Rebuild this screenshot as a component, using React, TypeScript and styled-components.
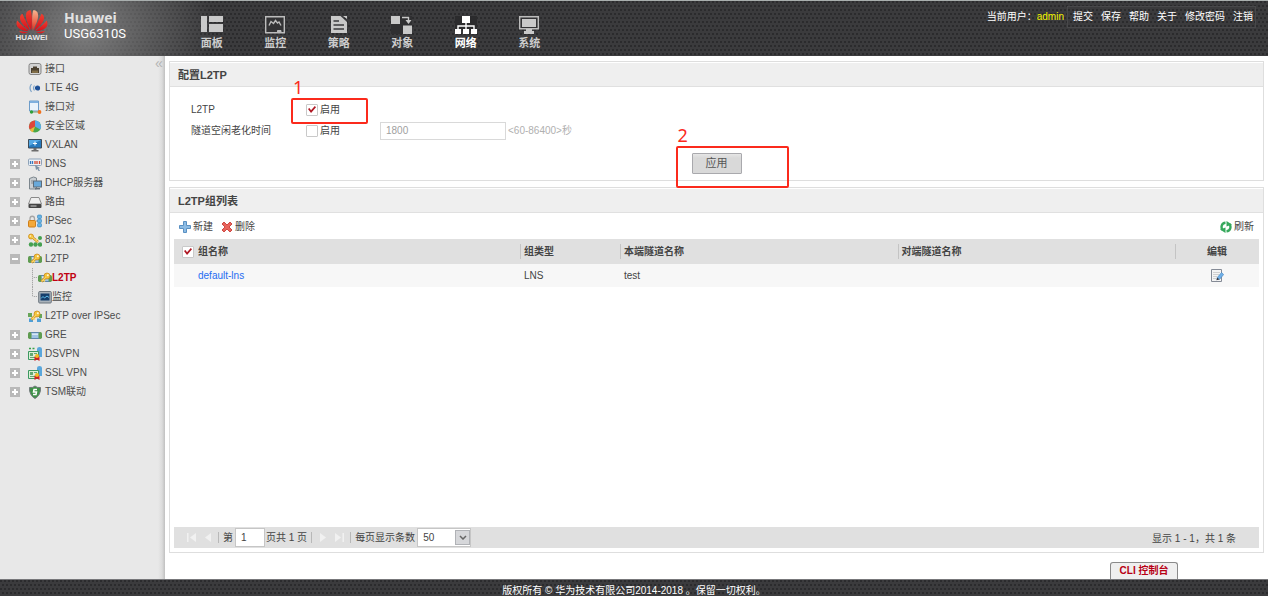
import React from "react";
import styled, { createGlobalStyle } from "styled-components";

const GlobalStyle = createGlobalStyle`
  *, *::before, *::after { box-sizing: border-box; }
  body {
    margin: 0;
    background: #ffffff;
    color: #444444;
    font: 10px/14px "Liberation Sans", "Noto Sans CJK SC", sans-serif;
  }
  a { color: inherit; text-decoration: none; }
  button, input, select { font: inherit; color: inherit; margin: 0; }
`;

const mesh = `
  radial-gradient(circle at 1px 1px, #2b2b2d 1px, transparent 1px) 0 0 / 4px 8px,
  radial-gradient(circle at 1px 1px, #2b2b2d 1px, transparent 1px) 2px 4px / 4px 8px`;

const Page = styled.div`
  display: flex;
  flex-direction: column;
  min-height: 100vh;
`;

/* ---------- header ---------- */

const Header = styled.header`
  display: flex;
  align-items: flex-start;
  height: 56px;
  border-top: 1px solid #a9afae;
  background: radial-gradient(ellipse 130px 110px at 84px 28px, rgba(150, 150, 150, 0.75), rgba(130, 130, 130, 0.5) 45%, transparent), ${mesh}, #3b3b3d;
  color: #ffffff;
`;

const Brand = styled.div`
  display: flex;
  width: 180px;
  flex: none;
  padding: 8px 0 0 14px;
  gap: 15px;
`;

const LogoMark = styled.div`
  display: flex;
  flex-direction: column;
  align-items: center;
  width: 35px;
  color: #e6e6e6;
  font: bold 8px/8px "Liberation Sans", sans-serif;
`;

const BrandText = styled.div`
  font-family: "Open Sans", sans-serif;
`;

const BrandName = styled.div`
  font-size: 14px;
  font-weight: 700;
  line-height: 18px;
  color: #e2e2e2;
`;

const Model = styled.div`
  font-family: Roboto, sans-serif;
  font-size: 13px;
  line-height: 14px;
`;

const Nav = styled.nav`
  display: flex;
  width: 381px;
  padding-top: 14px;
`;

const NavItem = styled.a<{ $active?: boolean }>`
  display: flex;
  flex: 1;
  flex-direction: column;
  align-items: center;
  gap: 1px;
  font-size: 11px;
  font-weight: 700;
  line-height: 16px;
  color: ${(p) => (p.$active ? "#ffffff" : "#cccccc")};
`;

const UserBar = styled.div`
  display: flex;
  align-items: center;
  margin: 5px 12px 0 auto;
  line-height: 20px;
`;

const UserName = styled.span`
  margin: 0 3px 0 0;
  color: #f4f400;
`;

const UserLinks = styled.div`
  display: flex;
  gap: 8px;
  padding: 0 2px 0 5px;
  border: 1px solid #48484a;
`;

/* ---------- sidebar ---------- */

const Body = styled.div`
  display: flex;
  flex: 1;
`;

const Sidebar = styled.aside`
  position: relative;
  width: 165px;
  flex: none;
  padding-top: 3px;
  background: linear-gradient(to right, #e8e8e8 158px, #dcdcdc 162px, #c0c0c0);
`;

const Collapse = styled.button`
  position: absolute;
  top: 2px;
  right: 1px;
  width: 10px;
  padding: 0;
  border: 0;
  background: none;
  color: #b4b4b4;
  font-size: 14px;
  line-height: 11px;
`;

const Tree = styled.ul`
  margin: 0;
  padding: 0 0 0 10px;
  list-style: none;
`;

const TreeRow = styled.li`
  display: flex;
  align-items: center;
  height: 19px;
`;

const ExpandSlot = styled.span`
  display: flex;
  width: 18px;
  flex: none;
`;

const Expander = styled.button<{ $open?: boolean }>`
  position: relative;
  width: 10px;
  height: 10px;
  padding: 0;
  border: 0;
  background: #b9b9b9;
  &::before, &::after {
    content: "";
    position: absolute;
    background: #ffffff;
  }
  &::before { left: 2px; top: 4px; width: 6px; height: 2px; }
  &::after { left: 4px; top: 2px; width: 2px; height: ${(p) => (p.$open ? "0" : "6px")}; }
`;

const TreeLink = styled.a<{ $active?: boolean; $nested?: boolean }>`
  display: flex;
  align-items: center;
  gap: ${(p) => (p.$nested ? "0" : "3px")};
  color: ${(p) => (p.$active ? "#c00010" : "#4c4c4c")};
  font-weight: ${(p) => (p.$active ? 700 : 400)};
`;

const Branch = styled.span<{ $last?: boolean }>`
  width: 6px;
  height: 19px;
  margin-left: 22px;
  background:
    repeating-linear-gradient(#a8a8a8 0 1px, #d6d6d6 1px 2px) 0 0 / 1px ${(p) => (p.$last ? "10px" : "19px")} no-repeat,
    repeating-linear-gradient(to right, #a8a8a8 0 1px, #d6d6d6 1px 2px) 0 9px / 5px 1px no-repeat;
`;

/* ---------- content ---------- */

const Main = styled.main`
  display: flex;
  flex: 1;
  min-width: 0;
  flex-direction: column;
  gap: 6px;
  padding: 5px 4px 0;
`;

const Panel = styled.section<{ $fill?: boolean }>`
  display: flex;
  flex-direction: column;
  flex: ${(p) => (p.$fill ? "1" : "none")};
  padding: 1px 0 4px;
  border: 1px solid #dedede;
`;

const PanelTitle = styled.h2`
  margin: 0;
  padding: 1px 8px 0;
  border-bottom: 1px solid #e0e0e0;
  background: #efefef;
  font-size: 11px;
  line-height: 22px;
`;

const Form = styled.form`
  display: flex;
  flex-direction: column;
  padding: 12px 0 2px 21px;
`;

const FormRow = styled.div`
  display: flex;
  align-items: center;
  height: 21px;
`;

const FieldName = styled.span`
  width: 115px;
`;

const CheckLabel = styled.label`
  position: relative;
  display: flex;
  align-items: center;
  gap: 2px;
  width: 74px;
`;

const Checkbox = styled.input.attrs({ type: "checkbox" })`
  position: relative;
  appearance: none;
  width: 12px;
  height: 12px;
  border: 1px solid #c9c9c9;
  border-radius: 1px;
  background: #ffffff;
  &:checked::after {
    content: "";
    position: absolute;
    inset: 1px;
    background: #b01824;
    clip-path: polygon(0 45%, 18% 30%, 38% 58%, 85% 5%, 100% 22%, 38% 95%);
  }
`;

const TimeInput = styled.input`
  width: 126px;
  height: 18px;
  padding: 0 5px;
  border: 1px solid #d9d9d9;
  background: #ffffff;
  color: #a0a0a0;
`;

const Hint = styled.span`
  padding-left: 2px;
  color: #b0b0b0;
`;

const FormActions = styled.div`
  display: flex;
  justify-content: center;
  padding: 12px 21px 0 0;
`;

const ApplyWrap = styled.div`
  position: relative;
`;

const ApplyButton = styled.button`
  display: block;
  width: 50px;
  height: 21px;
  padding: 0;
  border: 1px solid #a9a9ad;
  border-radius: 1px;
  background: linear-gradient(#e6e6e6, #d9d9d9 4px);
  color: #555555;
  font-size: 11px;
  line-height: 19px;
`;

const Callout = styled.span<{ $box: string }>`
  position: absolute;
  inset: ${(p) => p.$box};
  border: 2px solid #fb2a1c;
  border-radius: 2px;
  pointer-events: none;
`;

const CalloutNumber = styled.span`
  position: absolute;
  left: 0;
  bottom: 100%;
  color: #fb2a1c;
  font: 18px/26px "Noto Sans", sans-serif;
`;

const Toolbar = styled.div`
  display: flex;
  align-items: center;
  gap: 8px;
  height: 26px;
  padding: 2px 9px 0;
`;

const ToolButton = styled.button<{ $end?: boolean }>`
  display: flex;
  align-items: center;
  gap: 2px;
  margin-left: ${(p) => (p.$end ? "auto" : "0")};
  padding: 0;
  border: 0;
  background: none;
`;

const Table = styled.table`
  width: calc(100% - 8px);
  margin: 0 4px;
  border-collapse: collapse;
  table-layout: fixed;
`;

const Th = styled.th<{ $w?: number; $first?: boolean; $center?: boolean }>`
  width: ${(p) => (p.$w ? `${p.$w}px` : "auto")};
  height: 25px;
  padding: 0 0 0 ${(p) => (p.$first ? "8px" : p.$center ? "0" : "4px")};
  background: ${(p) =>
    p.$first ? "#e0e0e0" : "linear-gradient(#c4c4c4, #c4c4c4) 0 5px / 1px 15px no-repeat #e0e0e0"};
  text-align: ${(p) => (p.$center ? "center" : "left")};
`;

const HeadCheck = styled.label`
  display: flex;
  align-items: center;
  gap: 4px;
`;

const Td = styled.td<{ $first?: boolean; $center?: boolean }>`
  height: 23px;
  padding: 0 0 0 ${(p) => (p.$first ? "24px" : p.$center ? "0" : "4px")};
  background: #f7f7f7;
  text-align: ${(p) => (p.$center ? "center" : "left")};
`;

const GroupLink = styled.a`
  color: #1f6df2;
`;

const IconButton = styled.button`
  display: inline-flex;
  padding: 0;
  border: 0;
  background: none;
  vertical-align: middle;
`;

const Pager = styled.div`
  display: flex;
  align-items: center;
  height: 21px;
  margin: auto 4px 0;
  padding: 0 23px 0 10px;
  background: #e0e0e0;
`;

const PagerButton = styled.button`
  display: flex;
  width: 15px;
  justify-content: center;
  padding: 0;
  border: 0;
  background: none;
`;

const Separator = styled.span`
  width: 1px;
  height: 11px;
  margin: 0 4px;
  background: #b8b8b8;
`;

const PageInput = styled.input`
  width: 30px;
  height: 19px;
  margin: 0 1px 0 2px;
  padding: 0 5px;
  border: 1px solid #c6c6c6;
  background: #ffffff;
`;

const SizeBox = styled.span`
  position: relative;
  display: flex;
  margin-left: 2px;
`;

const SizeSelect = styled.select`
  appearance: none;
  width: 54px;
  height: 19px;
  padding: 0 5px;
  border: 1px solid #c6c6c6;
  border-radius: 0;
  background: #ffffff;
`;

const SelectArrow = styled.span`
  position: absolute;
  top: 2px;
  right: 1px;
  display: flex;
  align-items: center;
  justify-content: center;
  width: 15px;
  height: 15px;
  border: 1px solid #b0b2b6;
  background: #d6d7da;
  pointer-events: none;
`;

const Total = styled.span`
  margin-left: auto;
  padding-top: 2px;
`;

const ConsoleBar = styled.div`
  display: flex;
  justify-content: flex-end;
  padding: 3px 86px 0 0;
`;

const ConsoleTab = styled.button`
  width: 68px;
  height: 17px;
  padding: 0;
  border: 1px solid #8a8a8a;
  border-bottom: 0;
  border-radius: 3px 3px 0 0;
  background: #efefef;
  color: #b80014;
  font-weight: 700;
`;

const Footer = styled.footer`
  height: 17px;
  padding-top: 4px;
  border-top: 1px solid #77777a;
  background: ${mesh}, #3b3b3d;
  color: #ffffff;
  line-height: 13px;
  text-align: center;
`;

/* ---------- drawings ---------- */

const HuaweiLogo = () => (
  <svg width="32" height="25" viewBox="0 0 32 25" aria-hidden="true">
    <defs>
      <linearGradient id="petal" x1="0" y1="0" x2="0" y2="1">
        <stop offset="0" stopColor="#ee4030" />
        <stop offset="1" stopColor="#d40f1b" />
      </linearGradient>
      <linearGradient id="petalLight" x1="0" y1="0" x2="0" y2="1">
        <stop offset="0" stopColor="#f9b48e" />
        <stop offset="1" stopColor="#e0301f" />
      </linearGradient>
    </defs>
    <g fill="url(#petal)">
      <path d="M15.300 21.500C11.500 14.500 8.500 8 10.500 3.500 11.500 1.500 13.500 1 14.800 1.200 16 5 16.300 14 15.300 21.500Z" />
      <path d="M14 21.800C8 17.500 3.500 12.500 4 8.200 4.200 6.500 5.300 5.300 6.500 4.800 8.500 10 12 16 14 21.800Z" />
      <path d="M18 21.800C24 17.500 28.500 12.500 28 8.200 27.800 6.500 26.700 5.300 25.500 4.800 23.500 10 20 16 18 21.800Z" />
      <path d="M12.600 22.200C7 22 2 20 .8 16.500 .2 14.500 .6 12.800 1.400 11.500 4.500 15.500 9.500 19 12.600 22.200Z" />
      <path d="M19.400 22.200C25 22 30 20 31.200 16.500 31.800 14.500 31.400 12.800 30.600 11.500 27.500 15.500 22.500 19 19.400 22.200Z" />
      <path d="M12 23C9 24.800 5 25.200 3 21.800 6 22.800 9 23 12 23Z" />
      <path d="M20 23C23 24.800 27 25.200 29 21.800 26 22.800 23 23 20 23Z" />
    </g>
    <path fill="url(#petalLight)" d="M16.700 21.500C20.500 14.500 23.500 8 21.500 3.500 20.500 1.500 18.500 1 17.200 1.200 16 5 15.700 14 16.700 21.500Z" />
  </svg>
);

type NavIconName = "panel" | "monitor" | "policy" | "object" | "network" | "system";

const navShapes: Record<NavIconName, React.ReactNode> = {
  panel: (
    <g fill="#c9c9c9">
      <path d="M0 1h6v16H0zM8 1h14v6H8zM8 9h14v8H8z" />
    </g>
  ),
  monitor: (
    <g fill="none" stroke="#bcbcbc">
      <path fill="#333335" strokeWidth="1.400" d="M1.700 1.700h18.600v16H1.700z" />
      <path strokeWidth="1.400" d="M5 10.500l2-4 2.500 2 2-3 2 2.500 1.500-1 2 3.500" />
      <path fill="#bcbcbc" d="M13.500 15.500h3.500v1.500h-3.500z" />
    </g>
  ),
  policy: (
    <g>
      <path fill="#c9c9c9" d="M3 1h9.500l6.500 6v11H3z" />
      <path fill="#c9c9c9" d="M15 1h4v3z" />
      <path stroke="#3a3a3c" strokeWidth="1.400" d="M5.500 6h5.500M5.500 10H16M5.500 14H16" />
    </g>
  ),
  object: (
    <g>
      <path fill="#2f2f31" d="M0 1h21v18H0z" />
      <path fill="#c9c9c9" d="M0 1h9v8H0zM12 10.500h9V19h-9z" />
      <path fill="none" stroke="#c9c9c9" strokeWidth="1.400" d="M11 2.500h6.500V6" />
      <path fill="#c9c9c9" d="M14.500 5h6l-3 4z" />
    </g>
  ),
  network: (
    <g>
      <path fill="#2b2b2d" d="M0 1h22v13H0z" />
      <path fill="#ffffff" d="M7 1h8v7H7zM0 14h6v5H0zM8 14h6v5H8zM16 14h6v5h-6z" />
      <path fill="none" stroke="#ffffff" strokeWidth="1.400" d="M11 7v8M3 15v-4h16v4" />
    </g>
  ),
  system: (
    <g>
      <path fill="#333335" stroke="#bcbcbc" strokeWidth="1.400" d="M1.700 1.700h18.600v12.100H1.700z" />
      <path fill="#c9c9c9" d="M4 4h14v8H4zM8 14h6v2H8zM6 16h10v3H6z" />
    </g>
  ),
};

const NavIcon = ({ name }: { name: NavIconName }) => (
  <svg width="22" height="19" viewBox="0 0 22 19" aria-hidden="true">
    {navShapes[name]}
  </svg>
);

const keyShape = (
  <g>
    <path fill="none" stroke="#c98413" strokeWidth="2.600" d="M8 6L3.500 10.500" />
    <circle cx="9" cy="5" r="3" fill="#f3c43c" stroke="#c98413" strokeWidth=".7" />
    <path fill="none" stroke="#f7d565" strokeWidth="1.300" d="M8 6L3.500 10.500M5.500 9l1.500 1.500" />
    <circle cx="9.800" cy="4.300" r="1" fill="#fff6d6" />
  </g>
);

const tunnelShape = (
  <g>
    <rect x="1" y="4.500" width="12" height="6" rx="2" fill="#9fc3e6" stroke="#5f86ad" />
    <path fill="#d5e6f6" d="M4 5.500h6v1.500H4z" />
    <rect x="0" y="4" width="3.500" height="7" rx="1.700" fill="#5f9c50" />
    <rect x="10.500" y="4" width="3.500" height="7" rx="1.700" fill="#5f9c50" />
  </g>
);

const certShape = (
  <g>
    <path fill="#5aa7dc" d="M9 2q0-2 2.500-2T14 2v8H9z" />
    <path fill="#dcefd8" stroke="#3c9960" d="M.5 4.500h10v8H.5z" />
    <path fill="#62a873" d="M2 6h3v3H2zM6 6h3v1H6zM2 10h5v1H2z" />
    <path fill="#cf1f24" d="M6.500 9.500h5V14l-2.500-1.500L6.500 14z" />
    <circle cx="9" cy="9" r="2" fill="#f2b922" />
  </g>
);

type TreeIconName =
  | "port" | "lte" | "pair" | "zone" | "vxlan" | "dns" | "dhcp" | "route" | "ipsec"
  | "dot1x" | "l2tp" | "screen" | "l2tpIpsec" | "gre" | "dsvpn" | "sslvpn" | "tsm";

const treeShapes: Record<TreeIconName, React.ReactNode> = {
  port: (
    <g>
      <rect x="1" y="1.500" width="12" height="11" rx="2" fill="#d2d2d2" stroke="#858585" />
      <path fill="#4b4030" d="M3 6h2V4.500h4V6h2v5H3z" />
      <path stroke="#b79b5e" d="M5 8.500V11M7 8.500V11M9 8.500V11" />
    </g>
  ),
  lte: (
    <g fill="none" stroke="#7da3c8" strokeWidth="1.200">
      <path d="M3.500 3Q.5 7 3.500 11M6.500 4.500q-2 2.500 0 5" />
      <circle cx="9.500" cy="7" r="2" fill="#1c4f97" stroke="#1c4f97" />
    </g>
  ),
  pair: (
    <g>
      <path fill="#eaf3fb" stroke="#6d9cc9" d="M1.500 1h9v10h-9z" />
      <path fill="#7fb0de" d="M2 1h8v2H2z" />
      <path stroke="#7a9b70" d="M4 12h7" />
      <circle cx="3.500" cy="12" r="1.700" fill="#2fa03b" />
      <circle cx="11.500" cy="12" r="1.900" fill="#f2711c" />
    </g>
  ),
  zone: (
    <g>
      <circle cx="7" cy="7.500" r="6" fill="#49a849" />
      <path fill="#e0473b" d="M7 7.500V1.500A6 6 0 0 0 1.800 10.500z" />
      <path fill="#5cabe8" d="M7 7.500V1.500a6 6 0 0 1 5.200 9z" />
      <path fill="#f0b53a" d="M7 7.500L1.800 10.500A6 6 0 0 0 5 13.200z" />
    </g>
  ),
  vxlan: (
    <g>
      <path fill="#2679bd" stroke="#3d4a56" d="M.5 1.500h13v8.500H.5z" />
      <path fill="#55a8e4" d="M1 2h12L1 8z" />
      <path stroke="#ffffff" d="M7 3.500v4M5 5.500h4" />
      <path fill="#6c6c6c" d="M5.500 10h3v2h-3zM3.500 12h7v1.500h-7z" />
    </g>
  ),
  dns: (
    <g>
      <rect x=".5" y="2" width="13" height="6.500" rx="1" fill="#edf2f8" stroke="#8fa3b8" />
      <path stroke="#3779bd" strokeWidth="1.300" d="M2.500 4v3M4.500 4v3" />
      <path stroke="#d2452f" strokeWidth="1.300" d="M7 4v3M9 4v3M11.500 4v3" />
      <path fill="#7c91a6" d="M7 8l5 3-1.500.5L12 14l-1.500 0-1-2-1.500 1z" />
    </g>
  ),
  dhcp: (
    <g>
      <path fill="#c9ced2" stroke="#7c868d" d="M1.500 2.500l4-1.500 3 1v11h-7z" />
      <rect x="5.500" y="5" width="8" height="6" fill="#68a9da" stroke="#5d6b77" />
      <path fill="#66727c" d="M7 12h5v1.500H7z" />
      <path stroke="#838c92" d="M3 5h2M3 7h2" />
    </g>
  ),
  route: (
    <g>
      <path fill="#efefef" stroke="#8a8a8a" d="M3 2.500h8l2.500 6.500H.5z" />
      <rect x=".5" y="9" width="13" height="4" rx="1" fill="#454545" />
      <path stroke="#cfcfcf" d="M2.500 11h6" />
    </g>
  ),
  ipsec: (
    <g>
      <path fill="none" stroke="#a5a5a5" strokeWidth="1.300" d="M2 7V4.500a2 2 0 0 1 4.500 0V7" />
      <rect x=".5" y="6.500" width="7" height="6.500" rx="1" fill="#f3a93a" stroke="#cf7f19" />
      <path stroke="#8e8e8e" d="M8 7h2" />
      <g fill="#66b4e6" stroke="#2f7fb8" strokeWidth=".6">
        <rect x="9.500" y="1" width="4" height="3.500" rx="1" />
        <rect x="9.500" y="5.200" width="4" height="3.500" rx="1" />
        <rect x="9.500" y="9.400" width="4" height="3.500" rx="1" />
      </g>
    </g>
  ),
  dot1x: (
    <g>
      <g fill="#44a04f">
        <circle cx="12" cy="5" r="2" />
        <circle cx="3" cy="11.500" r="2.200" />
        <circle cx="7.500" cy="11.500" r="2.200" />
        <circle cx="12" cy="11.500" r="2.200" />
      </g>
      <path fill="none" stroke="#c98413" strokeWidth="2.400" d="M4 4l6 5" />
      <circle cx="3" cy="3.500" r="2.500" fill="#f3c43c" stroke="#c98413" strokeWidth=".7" />
      <path fill="none" stroke="#f7d565" strokeWidth="1.200" d="M4 4l6 5M8 7.500l1-1.500" />
      <circle cx="2.500" cy="3" r=".8" fill="#fff6d6" />
    </g>
  ),
  l2tp: (
    <g>
      {tunnelShape}
      {keyShape}
    </g>
  ),
  screen: (
    <g>
      <rect x=".7" y="1.500" width="12.600" height="11.500" rx="1" fill="#a9b2ba" stroke="#6b747d" />
      <path fill="#153e6c" d="M2.500 3.500h9v7h-9z" />
      <path fill="none" stroke="#5fc0ee" d="M3 8.500l2-2L6.500 8 9 6l2 1.500" />
    </g>
  ),
  l2tpIpsec: (
    <g>
      <path fill="#67a558" d="M0 4h4v4H0zM11 5h3v4h-3z" />
      <path fill="#4e9fd8" d="M1 9.500h4V13H1zM9 9.500h4V13H9z" />
      {keyShape}
    </g>
  ),
  gre: tunnelShape,
  dsvpn: (
    <g>
      {certShape}
      <path stroke="#3aa04a" strokeWidth="1.500" d="M1 1.500h2M4.500 1.500h2" />
    </g>
  ),
  sslvpn: certShape,
  tsm: (
    <g>
      <path fill="#3d9147" stroke="#70787a" d="M1.500 2.500Q5 3 7 1q2 2 5.500 1.500Q13 10 7 13.500 1 10 1.500 2.500z" />
      <path fill="none" stroke="#ffffff" strokeWidth="1.500" d="M9 4.500H6L5.500 7h3L8 9.500H5" />
    </g>
  ),
};

const TreeIcon = ({ name }: { name: TreeIconName }) => (
  <svg width="14" height="14" viewBox="0 0 14 14" aria-hidden="true">
    {treeShapes[name]}
  </svg>
);

const AddIcon = () => (
  <svg width="12" height="12" viewBox="0 0 12 12" aria-hidden="true">
    <path fill="#8bbbe4" stroke="#5a90c2" d="M4.500.5h3v4h4v3h-4v4h-3v-4h-4v-3h4z" />
  </svg>
);

const DeleteIcon = () => (
  <svg width="12" height="12" viewBox="0 0 12 12" aria-hidden="true">
    <path fill="#e8645c" stroke="#cf4a44" d="M3 1l3 3 3-3 2 2-3 3 3 3-2 2-3-3-3 3-2-2 3-3-3-3z" />
  </svg>
);

const RefreshIcon = () => (
  <svg width="12" height="12" viewBox="0 0 12 12" aria-hidden="true">
    <path fill="none" stroke="#36a85c" strokeWidth="2.400" d="M5.500 1.700C1.500 2 .8 6 2.300 9" />
    <path fill="#36a85c" d="M0 8.500l5.500-2V12z" />
    <path fill="none" stroke="#36a85c" strokeWidth="2.400" d="M6.500 10.300C10.500 10 11.200 6 9.700 3" />
    <path fill="#36a85c" d="M12 3.500l-5.500 2V0z" />
  </svg>
);

const EditIcon = () => (
  <svg width="13" height="13" viewBox="0 0 13 13" aria-hidden="true">
    <path fill="#f4f4f4" stroke="#858b96" d="M.5.5h10v12H.5z" />
    <path stroke="#d0d0d0" d="M2 3.500h7M2 5.500h6M2 7.500h4M2 9.500h3" />
    <path fill="#6fb0e8" stroke="#4280bb" strokeWidth=".6" d="M10.500 3.500l2.200 2L8.500 10.500 6.300 8.500z" />
    <path fill="#2c3440" d="M6 8.500l2.400 2-3 .8z" />
  </svg>
);

const ArrowIcon = ({ bar, right }: { bar?: boolean; right?: boolean }) => (
  <svg width="10" height="9" viewBox="0 0 10 9" aria-hidden="true">
    <g transform={right ? "rotate(180 5 4.500)" : undefined} fill="#f1f1f1">
      <path d="M9 0v9L3 4.500z" />
      {bar && <path d="M0 0h1.500v9H0z" />}
    </g>
  </svg>
);

/* ---------- data ---------- */

const navItems: { icon: NavIconName; label: string; active?: boolean }[] = [
  { icon: "panel", label: "面板" },
  { icon: "monitor", label: "监控" },
  { icon: "policy", label: "策略" },
  { icon: "object", label: "对象" },
  { icon: "network", label: "网络", active: true },
  { icon: "system", label: "系统" },
];

const userLinks = ["提交", "保存", "帮助", "关于", "修改密码", "注销"];

type TreeNode = {
  icon: TreeIconName;
  label: string;
  expander?: "open" | "closed";
  nested?: "middle" | "last";
  active?: boolean;
};

const treeNodes: TreeNode[] = [
  { icon: "port", label: "接口" },
  { icon: "lte", label: "LTE 4G" },
  { icon: "pair", label: "接口对" },
  { icon: "zone", label: "安全区域" },
  { icon: "vxlan", label: "VXLAN" },
  { icon: "dns", label: "DNS", expander: "closed" },
  { icon: "dhcp", label: "DHCP服务器", expander: "closed" },
  { icon: "route", label: "路由", expander: "closed" },
  { icon: "ipsec", label: "IPSec", expander: "closed" },
  { icon: "dot1x", label: "802.1x", expander: "closed" },
  { icon: "l2tp", label: "L2TP", expander: "open" },
  { icon: "l2tp", label: "L2TP", nested: "middle", active: true },
  { icon: "screen", label: "监控", nested: "last" },
  { icon: "l2tpIpsec", label: "L2TP over IPSec" },
  { icon: "gre", label: "GRE", expander: "closed" },
  { icon: "dsvpn", label: "DSVPN", expander: "closed" },
  { icon: "sslvpn", label: "SSL VPN", expander: "closed" },
  { icon: "tsm", label: "TSM联动", expander: "closed" },
];

const groups = [{ name: "default-lns", type: "LNS", local: "test", peer: "" }];

export default function App() {
  return (
    <Page>
      <GlobalStyle />
      <Header>
        <Brand>
          <LogoMark>
            <HuaweiLogo />
            HUAWEI
          </LogoMark>
          <BrandText>
            <BrandName>Huawei</BrandName>
            <Model>USG6310S</Model>
          </BrandText>
        </Brand>
        <Nav>
          {navItems.map((item) => (
            <NavItem key={item.icon} href="#" $active={item.active}>
              <NavIcon name={item.icon} />
              {item.label}
            </NavItem>
          ))}
        </Nav>
        <UserBar>
          <span>当前用户：</span>
          <UserName>admin</UserName>
          <UserLinks>
            {userLinks.map((label) => (
              <a key={label} href="#">{label}</a>
            ))}
          </UserLinks>
        </UserBar>
      </Header>

      <Body>
        <Sidebar>
          <Collapse type="button" aria-label="收起">«</Collapse>
          <Tree>
            {treeNodes.map((node, i) => (
              <TreeRow key={i}>
                {node.nested ? (
                  <Branch $last={node.nested === "last"} />
                ) : (
                  <ExpandSlot>
                    {node.expander && (
                      <Expander type="button" aria-label={node.label} $open={node.expander === "open"} />
                    )}
                  </ExpandSlot>
                )}
                <TreeLink href="#" $active={node.active} $nested={!!node.nested}>
                  <TreeIcon name={node.icon} />
                  {node.label}
                </TreeLink>
              </TreeRow>
            ))}
          </Tree>
        </Sidebar>

        <Main>
          <Panel>
            <PanelTitle>配置L2TP</PanelTitle>
            <Form onSubmit={(e) => e.preventDefault()}>
              <FormRow>
                <FieldName>L2TP</FieldName>
                <CheckLabel>
                  <Checkbox defaultChecked />
                  启用
                  <Callout $box="-5px 12px -7px -15px">
                    <CalloutNumber>1</CalloutNumber>
                  </Callout>
                </CheckLabel>
              </FormRow>
              <FormRow>
                <FieldName>隧道空闲老化时间</FieldName>
                <CheckLabel>
                  <Checkbox />
                  启用
                </CheckLabel>
                <TimeInput aria-label="隧道空闲老化时间" defaultValue="1800" disabled />
                <Hint>&lt;60-86400&gt;秒</Hint>
              </FormRow>
              <FormActions>
                <ApplyWrap>
                  <ApplyButton type="submit">应用</ApplyButton>
                  <Callout $box="-7px -47px -14px -16px">
                    <CalloutNumber>2</CalloutNumber>
                  </Callout>
                </ApplyWrap>
              </FormActions>
            </Form>
          </Panel>

          <Panel $fill>
            <PanelTitle>L2TP组列表</PanelTitle>
            <Toolbar>
              <ToolButton type="button"><AddIcon />新建</ToolButton>
              <ToolButton type="button"><DeleteIcon />删除</ToolButton>
              <ToolButton type="button" $end><RefreshIcon />刷新</ToolButton>
            </Toolbar>
            <Table>
              <thead>
                <tr>
                  <Th $w={346} $first>
                    <HeadCheck><Checkbox defaultChecked />组名称</HeadCheck>
                  </Th>
                  <Th $w={100}>组类型</Th>
                  <Th>本端隧道名称</Th>
                  <Th>对端隧道名称</Th>
                  <Th $w={84} $center>编辑</Th>
                </tr>
              </thead>
              <tbody>
                {groups.map((g) => (
                  <tr key={g.name}>
                    <Td $first><GroupLink href="#">{g.name}</GroupLink></Td>
                    <Td>{g.type}</Td>
                    <Td>{g.local}</Td>
                    <Td>{g.peer}</Td>
                    <Td $center>
                      <IconButton type="button" aria-label="编辑"><EditIcon /></IconButton>
                    </Td>
                  </tr>
                ))}
              </tbody>
            </Table>
            <Pager>
              <PagerButton type="button" aria-label="首页"><ArrowIcon bar /></PagerButton>
              <PagerButton type="button" aria-label="上一页"><ArrowIcon /></PagerButton>
              <Separator />
              <label htmlFor="page">第</label>
              <PageInput id="page" defaultValue="1" />
              <span>页共 1 页</span>
              <Separator />
              <PagerButton type="button" aria-label="下一页"><ArrowIcon right /></PagerButton>
              <PagerButton type="button" aria-label="末页"><ArrowIcon bar right /></PagerButton>
              <Separator />
              <label htmlFor="size">每页显示条数</label>
              <SizeBox>
                <SizeSelect id="size" defaultValue="50">
                  <option>50</option>
                  <option>100</option>
                </SizeSelect>
                <SelectArrow>
                  <svg width="8" height="5" viewBox="0 0 8 5" aria-hidden="true">
                    <path fill="none" stroke="#666666" strokeWidth="1.500" d="M1 1l3 3 3-3" />
                  </svg>
                </SelectArrow>
              </SizeBox>
              <Total>显示 1 - 1，共 1 条</Total>
            </Pager>
          </Panel>
          <ConsoleBar>
            <ConsoleTab type="button">CLI 控制台</ConsoleTab>
          </ConsoleBar>
        </Main>
      </Body>

      <Footer>版权所有 © 华为技术有限公司2014-2018 。保留一切权利。</Footer>
    </Page>
  );
}
